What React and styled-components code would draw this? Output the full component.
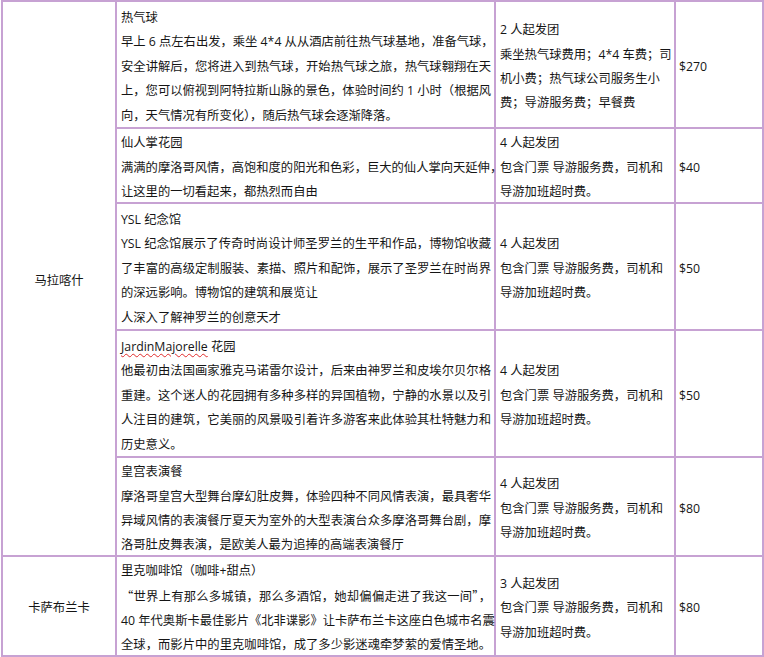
import React from 'react';
import styled, { createGlobalStyle } from 'styled-components';

const LINE = '#c7a2d3';

const GlobalStyle = createGlobalStyle`
  html, body {
    margin: 0;
    padding: 0;
    background: #fff;
  }
  body {
    font-family: "Open Sans", "Noto Sans CJK SC", sans-serif;
    font-size: 12.3px;
    color: #151515;
  }
`;

const Sheet = styled.div`
  display: grid;
  grid-template-columns: 114px 379px 180px 88px;
  grid-template-rows: 127px 75px 127px 127px 99px 100px;
  width: max-content;
  margin-left: 1px;
  border-top: 2px solid ${LINE};
  border-left: 2px solid ${LINE};
`;

const Cell = styled.div`
  box-sizing: border-box;
  display: flex;
  flex-direction: column;
  justify-content: center;
  min-width: 0;
  padding: 5px 3px 0 4px;
  border-right: 2px solid ${LINE};
  border-bottom: 2px solid ${LINE};
`;

const CityCell = styled(Cell)`
  grid-column: 1;
  grid-row: span ${(p) => p.$span};
  align-items: center;
  padding: 5px 0 0;
`;

const DescCell = styled(Cell)`
  grid-column: 2;
`;

const GroupCell = styled(Cell)`
  grid-column: 3;
`;

const PriceCell = styled(Cell)`
  grid-column: 4;
  padding-left: 3px;
`;

const Line = styled.div`
  line-height: 24.4px;
  white-space: nowrap;
  text-align: ${(p) => (p.$full ? 'justify' : 'left')};
  text-align-last: ${(p) => (p.$full ? 'justify' : 'auto')};
`;

const Misspelt = styled.span`
  text-decoration: underline wavy #e02b2b;
  text-decoration-thickness: 1px;
  text-underline-offset: 2px;
`;

const Wide = styled.span`
  font-family: "Noto Sans CJK SC", sans-serif;
`;

const standardGroup = ['包含门票 导游服务费，司机和', '导游加班超时费。'];

const cities = [
  {
    name: '马拉喀什',
    items: [
      {
        title: '热气球',
        body: [
          ['早上 6 点左右出发，乘坐 4*4 从从酒店前往热气球基地，准备气球，', true],
          ['安全讲解后，您将进入到热气球，开始热气球之旅，热气球翱翔在天', true],
          ['上，您可以俯视到阿特拉斯山脉的景色，体验时间约 1 小时（根据风', true],
          ['向，天气情况有所变化），随后热气球会逐渐降落。', false],
        ],
        size: '2 人起发团',
        group: ['乘坐热气球费用；4*4 车费；司', '机小费；热气球公司服务生小', '费；导游服务费；早餐费'],
        price: '$270',
      },
      {
        title: '仙人掌花园',
        body: [
          ['满满的摩洛哥风情，高饱和度的阳光和色彩，巨大的仙人掌向天延伸，', true],
          ['让这里的一切看起来，都热烈而自由', false],
        ],
        size: '4 人起发团',
        group: standardGroup,
        price: '$40',
      },
      {
        title: 'YSL 纪念馆',
        body: [
          ['YSL 纪念馆展示了传奇时尚设计师圣罗兰的生平和作品，博物馆收藏', true],
          ['了丰富的高级定制服装、素描、照片和配饰，展示了圣罗兰在时尚界', true],
          ['的深远影响。博物馆的建筑和展览让', false],
          ['人深入了解神罗兰的创意天才', false],
        ],
        size: '4 人起发团',
        group: standardGroup,
        price: '$50',
      },
      {
        title: (
          <>
            <Misspelt>JardinMajorelle</Misspelt> 花园
          </>
        ),
        body: [
          ['他最初由法国画家雅克马诺雷尔设计，后来由神罗兰和皮埃尔贝尔格', true],
          ['重建。这个迷人的花园拥有多种多样的异国植物，宁静的水景以及引', true],
          ['人注目的建筑，它美丽的风景吸引着许多游客来此体验其杜特魅力和', true],
          ['历史意义。', false],
        ],
        size: '4 人起发团',
        group: standardGroup,
        price: '$50',
      },
      {
        title: '皇宫表演餐',
        body: [
          ['摩洛哥皇宫大型舞台摩幻肚皮舞，体验四种不同风情表演，最具奢华', true],
          ['异域风情的表演餐厅夏天为室外的大型表演台众多摩洛哥舞台剧，摩', true],
          ['洛哥肚皮舞表演，是欧美人最为追捧的高端表演餐厅', false],
        ],
        size: '4 人起发团',
        group: standardGroup,
        price: '$80',
      },
    ],
  },
  {
    name: '卡萨布兰卡',
    items: [
      {
        title: '里克咖啡馆（咖啡+甜点）',
        body: [
          [
            <>
              <Wide>“</Wide>世界上有那么多城镇，那么多酒馆，她却偏偏走进了我这一间<Wide>”</Wide>，
            </>,
            true,
          ],
          ['40 年代奥斯卡最佳影片《北非谍影》让卡萨布兰卡这座白色城市名震', true],
          ['全球，而影片中的里克咖啡馆，成了多少影迷魂牵梦萦的爱情圣地。', true],
        ],
        size: '3 人起发团',
        group: standardGroup,
        price: '$80',
      },
    ],
  },
];

function ItemRow({ item }) {
  return (
    <>
      <DescCell>
        <Line>{item.title}</Line>
        {item.body.map(([text, full], i) => (
          <Line key={i} $full={full}>
            {text}
          </Line>
        ))}
      </DescCell>
      <GroupCell>
        <Line>{item.size}</Line>
        {item.group.map((text) => (
          <Line key={text}>{text}</Line>
        ))}
      </GroupCell>
      <PriceCell>
        <Line>{item.price}</Line>
      </PriceCell>
    </>
  );
}

export default function App() {
  return (
    <>
      <GlobalStyle />
      <Sheet>
        {cities.map((city) => (
          <React.Fragment key={city.name}>
            <CityCell $span={city.items.length}>
              <Line>{city.name}</Line>
            </CityCell>
            {city.items.map((item, i) => (
              <ItemRow key={i} item={item} />
            ))}
          </React.Fragment>
        ))}
      </Sheet>
    </>
  );
}
